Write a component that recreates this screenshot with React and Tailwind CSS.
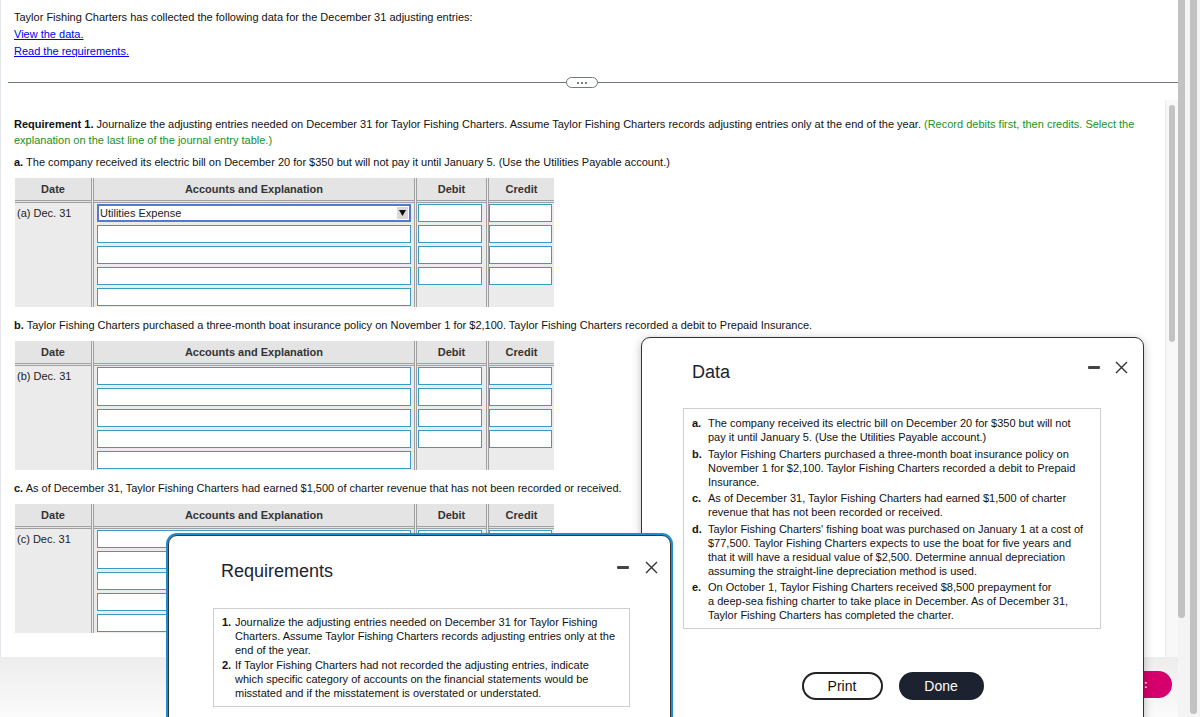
import React from "react";

const font = "font-['Liberation_Sans',Arial,Helvetica,sans-serif]";

// Table of inputs for one adjusting entry
const JournalTable = ({ label, selected }) => {
  const rows = [0, 1, 2, 3, 4];

  return (
    <div className="mx-[14px] flex w-[539px] bg-[#ebebeb]">
      {/* Date */}
      <div className="w-[79px] border-r-[3px] border-double border-[#a0a0a0]">
        <div className="flex h-[25px] items-center justify-center border-b-[3px] border-double border-[#a0a0a0] bg-[#e4e4e4] font-bold text-[#333]">
          Date
        </div>
        <div className="pl-[2px] pt-[1px] leading-[18px] text-[#222]">
          {label}
        </div>
      </div>

      {/* Accounts */}
      <div className="w-[323px] border-r-[3px] border-double border-[#a0a0a0]">
        <div className="flex h-[25px] items-center justify-center border-b-[3px] border-double border-[#a0a0a0] bg-[#e4e4e4] font-bold text-[#333]">
          Accounts and Explanation
        </div>
        <div className="flex flex-col gap-[3px] px-[3px] pb-[1px] pt-[1px]">
          {rows.map((r) =>
            r === 0 && selected ? (
              <div
                key={r}
                className="flex h-[18px] items-center justify-between border-2 border-[#5479d4] bg-white pl-[1px] pr-[1px] text-[#222]"
              >
                <span>{selected}</span>
                <span className="flex h-[12px] w-[11px] items-center justify-center bg-[#d9d9d9]">
                  <svg width="7" height="6" viewBox="0 0 7 6">
                    <path d="M0 0 L7 0 L3.5 6 Z" fill="#111" />
                  </svg>
                </span>
              </div>
            ) : (
              <div
                key={r}
                className="h-[18px] border border-[#3a9bc3] bg-white"
              />
            )
          )}
        </div>
      </div>

      {/* Debit */}
      <div className="w-[72px] border-r-[3px] border-double border-[#a0a0a0]">
        <div className="flex h-[25px] items-center justify-center border-b-[3px] border-double border-[#a0a0a0] bg-[#e4e4e4] font-bold text-[#333]">
          Debit
        </div>
        <div className="flex flex-col gap-[3px] pl-[1px] pr-[4px] pt-[1px]">
          {rows.slice(0, 4).map((r) => (
            <div
              key={r}
              className="h-[18px] border border-[#3a9bc3] bg-white"
            />
          ))}
        </div>
      </div>

      {/* Credit */}
      <div className="w-[65px]">
        <div className="flex h-[25px] items-center justify-center border-b-[3px] border-double border-[#a0a0a0] bg-[#e4e4e4] font-bold text-[#333]">
          Credit
        </div>
        <div className="flex flex-col gap-[3px] pr-[2px] pt-[1px]">
          {rows.slice(0, 4).map((r) => (
            <div
              key={r}
              className="h-[18px] border border-[#3a9bc3] bg-white"
            />
          ))}
        </div>
      </div>
    </div>
  );
};

const CloseIcon = () => (
  <svg width="13" height="13" viewBox="0 0 13 13">
    <path
      d="M1 1 L12 12 M12 1 L1 12"
      stroke="#333"
      strokeWidth="1.4"
      fill="none"
    />
  </svg>
);

const MinIcon = () => (
  <div className="h-[3px] w-[12px] rounded-[1px] bg-[#444]" />
);

const dataItems = [
  [
    "a.",
    "The company received its electric bill on December 20 for $350 but will not pay it until January 5. (Use the Utilities Payable account.)",
  ],
  [
    "b.",
    "Taylor Fishing Charters purchased a three-month boat insurance policy on November 1 for $2,100. Taylor Fishing Charters recorded a debit to Prepaid Insurance.",
  ],
  [
    "c.",
    "As of December 31, Taylor Fishing Charters had earned $1,500 of charter revenue that has not been recorded or received.",
  ],
  [
    "d.",
    "Taylor Fishing Charters' fishing boat was purchased on January 1 at a cost of $77,500. Taylor Fishing Charters expects to use the boat for five years and that it will have a residual value of $2,500. Determine annual depreciation assuming the straight-line depreciation method is used.",
  ],
];

const App = () => {
  return (
    <div
      className={`relative h-[717px] w-[1200px] overflow-hidden bg-white text-[11px] text-[#111] ${font}`}
    >
      <div className="flex h-full">
        {/* Main column */}
        <div className="flex w-[1178px] flex-col">
          <div className="flex h-[657px] flex-col border-l border-[#e2e5ea] bg-white">
            {/* Intro */}
            <div className="h-[100px]">
              <div className="px-[13px] pt-[9px] leading-[17px]">
                <div>
                  Taylor Fishing Charters has collected the following data for
                  the December 31 adjusting entries:
                </div>
                <div>
                  <span className="text-[#0000ee] underline">
                    View the data.
                  </span>
                </div>
                <div>
                  <span className="text-[#0000ee] underline">
                    Read the requirements.
                  </span>
                </div>
              </div>

              {/* Divider */}
              <div className="relative ml-[7px] mt-[17px] flex h-[11px] items-center">
                <div className="h-px w-full bg-[#6f7684]" />
                <div className="absolute left-[558px] top-0 flex h-[11px] w-[32px] items-center justify-center gap-[2px] rounded-full border border-[#6f7684] bg-white">
                  <span className="h-[2px] w-[2px] rounded-full bg-[#555]" />
                  <span className="h-[2px] w-[2px] rounded-full bg-[#555]" />
                  <span className="h-[2px] w-[2px] rounded-full bg-[#555]" />
                </div>
              </div>
            </div>

            {/* Scroll area */}
            <div className="flex flex-1">
              <div className="flex-1 pt-[16px]">
                <p className="pl-[13px] pr-[8px] leading-[16px]">
                  <b>Requirement 1.</b> Journalize the adjusting entries
                  needed on December 31 for Taylor Fishing Charters. Assume
                  Taylor Fishing Charters records adjusting entries only at the
                  end of the year.{" "}
                  <span className="text-[#18921b]">
                    (Record debits first, then credits. Select the explanation
                    on the last line of the journal entry table.)
                  </span>
                </p>

                <p className="mt-[6px] pl-[13px] leading-[16px]">
                  <b>a.</b> The company received its electric bill on December
                  20 for $350 but will not pay it until January 5. (Use the
                  Utilities Payable account.)
                </p>
                <div className="mt-[8px]">
                  <JournalTable
                    label="(a) Dec. 31"
                    selected="Utilities Expense"
                  />
                </div>

                <p className="mt-[10px] pl-[13px] leading-[16px]">
                  <b>b.</b> Taylor Fishing Charters purchased a three-month
                  boat insurance policy on November 1 for $2,100. Taylor
                  Fishing Charters recorded a debit to Prepaid Insurance.
                </p>
                <div className="mt-[8px]">
                  <JournalTable label="(b) Dec. 31" />
                </div>

                <p className="mt-[10px] pl-[13px] leading-[16px]">
                  <b>c.</b> As of December 31, Taylor Fishing Charters had
                  earned $1,500 of charter revenue that has not been recorded
                  or received.
                </p>
                <div className="mt-[8px]">
                  <JournalTable label="(c) Dec. 31" />
                </div>
              </div>

              {/* Inner scrollbar */}
              <div className="w-[13px] border-l border-[#ececec] bg-[#f8f8f8] px-[3px] pt-[5px]">
                <div className="h-[237px] rounded-full bg-[#c3c3c3]" />
              </div>
            </div>
          </div>

          {/* Footer */}
          <div className="flex-1 bg-gradient-to-b from-[#ededed] to-[#fbfbfb]" />
        </div>

        {/* Outer scrollbars */}
        <div className="flex w-[22px] gap-[5px] bg-[#f4f4f4]">
          <div className="h-[618px] w-[7px] rounded-b-full bg-[#c2c2c2]" />
          <div className="h-[714px] w-[7px] rounded-b-full bg-[#c2c2c2]" />
        </div>
      </div>

      {/* Pink button, mostly under the Data dialog */}
      <div className="absolute left-[1118px] top-[671px] flex h-[27px] w-[54px] items-center rounded-full bg-[#d5006c] pl-[26px] text-[11px] font-bold text-white">
        :
      </div>

      {/* Data dialog */}
      <div className="absolute left-[641px] top-[337px] h-[400px] w-[503px] rounded-t-[9px] border border-[#333] bg-white shadow-[0_2px_10px_rgba(0,0,0,0.25)]">
        <div className="flex justify-between">
          <div className="pl-[50px] pt-[23px] text-[18px] leading-[22px] text-[#1c2333]">
            Data
          </div>
          <div className="flex items-center gap-[15px] pr-[15px] pt-[13px]">
            <MinIcon />
            <CloseIcon />
          </div>
        </div>

        <div className="ml-[41px] mt-[25px] w-[418px] border border-[#cfcfcf] pb-[6px] pl-[8px] pr-[10px] pt-[7px] leading-[14px] text-[#111]">
          <div className="flex flex-col gap-[2.5px]">
            {dataItems.map(([k, text]) => (
              <div key={k} className="flex">
                <span className="w-[16px] shrink-0 font-bold">{k}</span>
                <span>{text}</span>
              </div>
            ))}
            <div className="flex">
              <span className="w-[16px] shrink-0 font-bold">e.</span>
              <span>
                On October 1, Taylor Fishing Charters received $8,500
                prepayment for
                <br />
                a deep-sea fishing charter to take place in December. As of
                December 31, Taylor Fishing Charters has completed the charter.
              </span>
            </div>
          </div>
        </div>

        <div className="mt-[43px] flex justify-center gap-[16px] text-[14px]">
          <button className="h-[28px] w-[81px] rounded-full border-2 border-[#222] bg-white text-[#111]">
            Print
          </button>
          <button className="h-[28px] w-[85px] rounded-full bg-[#1c2230] text-white">
            Done
          </button>
        </div>
      </div>

      {/* Requirements dialog */}
      <div className="absolute left-[168px] top-[535px] h-[240px] w-[503px] rounded-t-[9px] border border-[#333] bg-white ring-2 ring-[#1b8fd6]">
        <div className="flex justify-between">
          <div className="pl-[52px] pt-[24px] text-[18px] leading-[22px] text-[#1c2333]">
            Requirements
          </div>
          <div className="flex items-center gap-[16px] pr-[12px] pt-[17px]">
            <MinIcon />
            <CloseIcon />
          </div>
        </div>

        <div className="ml-[44px] mt-[26px] w-[417px] border border-[#cfcfcf] pb-[6px] pl-[8px] pr-[11px] pt-[6px] leading-[14px] text-[#111]">
          <div className="flex flex-col gap-[1px]">
            <div className="flex">
              <span className="w-[13px] shrink-0 font-bold">1.</span>
              <span>
                Journalize the adjusting entries needed on December 31 for
                Taylor Fishing Charters. Assume Taylor Fishing Charters records
                adjusting entries only at the end of the year.
              </span>
            </div>
            <div className="flex">
              <span className="w-[13px] shrink-0 font-bold">2.</span>
              <span>
                If Taylor Fishing Charters had not recorded the adjusting
                entries, indicate which specific category of accounts on the
                financial statements would be misstated and if the
                misstatement is overstated or understated.
              </span>
            </div>
          </div>
        </div>
      </div>
    </div>
  );
};

export default App;
